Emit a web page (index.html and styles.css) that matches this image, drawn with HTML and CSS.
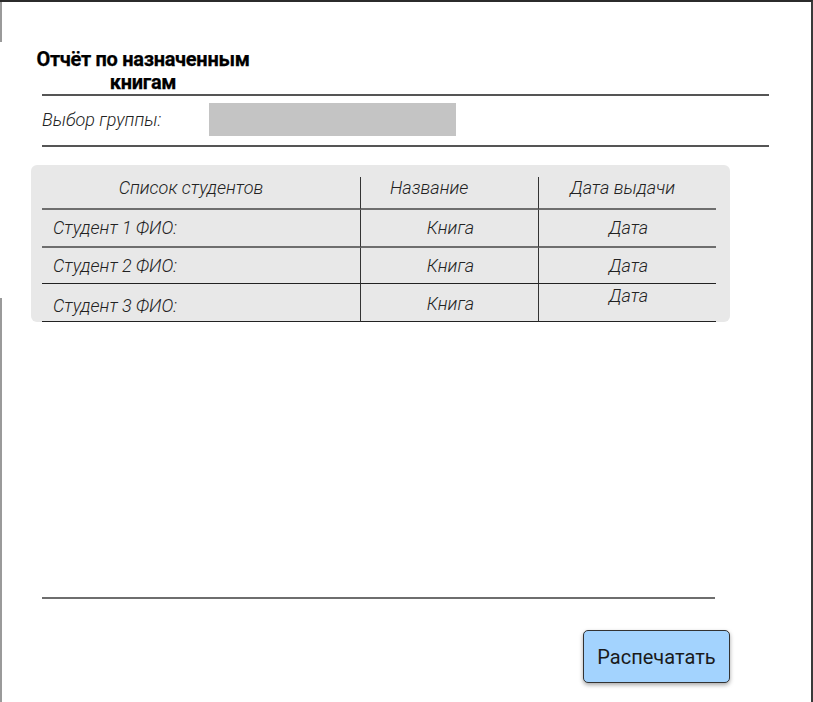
FILE: index.html
```html
<!DOCTYPE html>
<html lang="ru">
<head>
<meta charset="utf-8">
<title>Отчёт по назначенным книгам</title>
<link rel="stylesheet" href="styles.css">
</head>
<body>
<div class="frame">
  <h1 class="title">Отчёт по назначенным<br>книгам</h1>
  <div class="group-row">
    <span class="group-label">Выбор группы:</span>
    <div class="group-select"></div>
  </div>
  <div class="panel">
    <div class="grid">
      <div class="cell head c1">Список студентов</div>
      <div class="cell head c2 vline">Название</div>
      <div class="cell head c3 vline">Дата выдачи</div>

      <div class="cell r1 c1">Студент 1 ФИО:</div>
      <div class="cell r1 c2 vline center">Книга</div>
      <div class="cell r1 c3 vline center">Дата</div>

      <div class="cell r2 c1">Студент 2 ФИО:</div>
      <div class="cell r2 c2 vline center">Книга</div>
      <div class="cell r2 c3 vline center">Дата</div>

      <div class="cell r3 c1">Студент 3 ФИО:</div>
      <div class="cell r3 c2 vline center">Книга</div>
      <div class="cell r3 c3 vline center up">Дата</div>
    </div>
  </div>
  <div class="bottom-line"></div>
  <div class="actions">
    <button class="print-btn" type="button">Распечатать</button>
  </div>
</div>
</body>
</html>
```

FILE: styles.css
```css
html, body {
  margin: 0;
  padding: 0;
  background: #ffffff;
}

.frame {
  position: relative;
  width: 813px;
  height: 702px;
  box-sizing: border-box;
  border-top: 2px solid #2b2b2b;
  border-right: 2px solid #3a3a3a;
  font-family: Roboto, "Liberation Sans", sans-serif;
  color: #222;
  overflow: hidden;
}

.frame::before,
.frame::after {
  content: "";
  position: absolute;
  left: 0;
  width: 2px;
  background: #9a9a9a;
}
.frame::before { top: 0; height: 40px; }
.frame::after { top: 296px; bottom: 0; }

.title {
  margin: 46px 0 0 36px;
  width: 214px;
  font-size: 20px;
  line-height: 23px;
  font-weight: 700;
  letter-spacing: -0.3px;
  text-align: center;
  color: #000;
  -webkit-text-stroke: 0.25px #000;
}

.group-row {
  margin: 0 0 0 42px;
  width: 727px;
  height: 47px;
  padding-bottom: 2px;
  border-top: 2px solid #555;
  border-bottom: 2px solid #555;
  display: flex;
  align-items: center;
}

.group-label {
  width: 167px;
  font-size: 18px;
  font-weight: 300;
  font-style: italic;
  color: #222;
}

.group-select {
  width: 247px;
  height: 33px;
  background: #c4c4c4;
}

.panel {
  margin: 18px 0 0 31px;
  width: 699px;
  box-sizing: border-box;
  padding: 13px 0 0 11px;
  background: #e8e8e8;
  border-radius: 6px;
}

.grid {
  display: grid;
  grid-template-columns: 318px 178px 178px;
  grid-template-rows: 32px 38px 36px 38px;
}

.cell {
  font-size: 18px;
  font-weight: 300;
  font-style: italic;
  color: #222;
  display: flex;
  align-items: center;
  box-sizing: border-box;
  white-space: nowrap;
}

.vline { border-left: 1px solid #333; }

.head {
  align-items: flex-start;
  margin-top: -1px;
  border-bottom: 2px solid #6e6e6e;
}
.head.c1 { justify-content: center; padding-right: 20px; }
.head.c2 { padding-left: 29px; }
.head.c3 { padding-left: 31px; }

.c1:not(.head) { padding-left: 11px; }
.center { justify-content: center; padding-left: 2px; }

.r1 { border-bottom: 2px solid #6e6e6e; padding-bottom: 2px; }
.r2 { border-bottom: 1px solid #222; }
.r3 { border-bottom: 1px solid #222; }
.r3.c1 { padding-top: 5px; }
.r3.c2 { padding-top: 1px; }
.up { align-items: flex-start; padding-top: 1px; }

.bottom-line {
  margin: 275px 0 0 42px;
  width: 673px;
  height: 2px;
  background: #6e6e6e;
}

.actions {
  display: flex;
  justify-content: flex-end;
  width: 730px;
  margin-top: 31px;
}

.print-btn {
  width: 147px;
  height: 53px;
  background: #a3d3fe;
  border: 1px solid #333;
  border-radius: 5px;
  box-shadow: 0 2px 4px rgba(0, 0, 0, 0.35);
  font-family: Roboto, "Liberation Sans", sans-serif;
  font-size: 20px;
  font-weight: 400;
  color: #1a1a1a;
  padding: 0;
}
```
